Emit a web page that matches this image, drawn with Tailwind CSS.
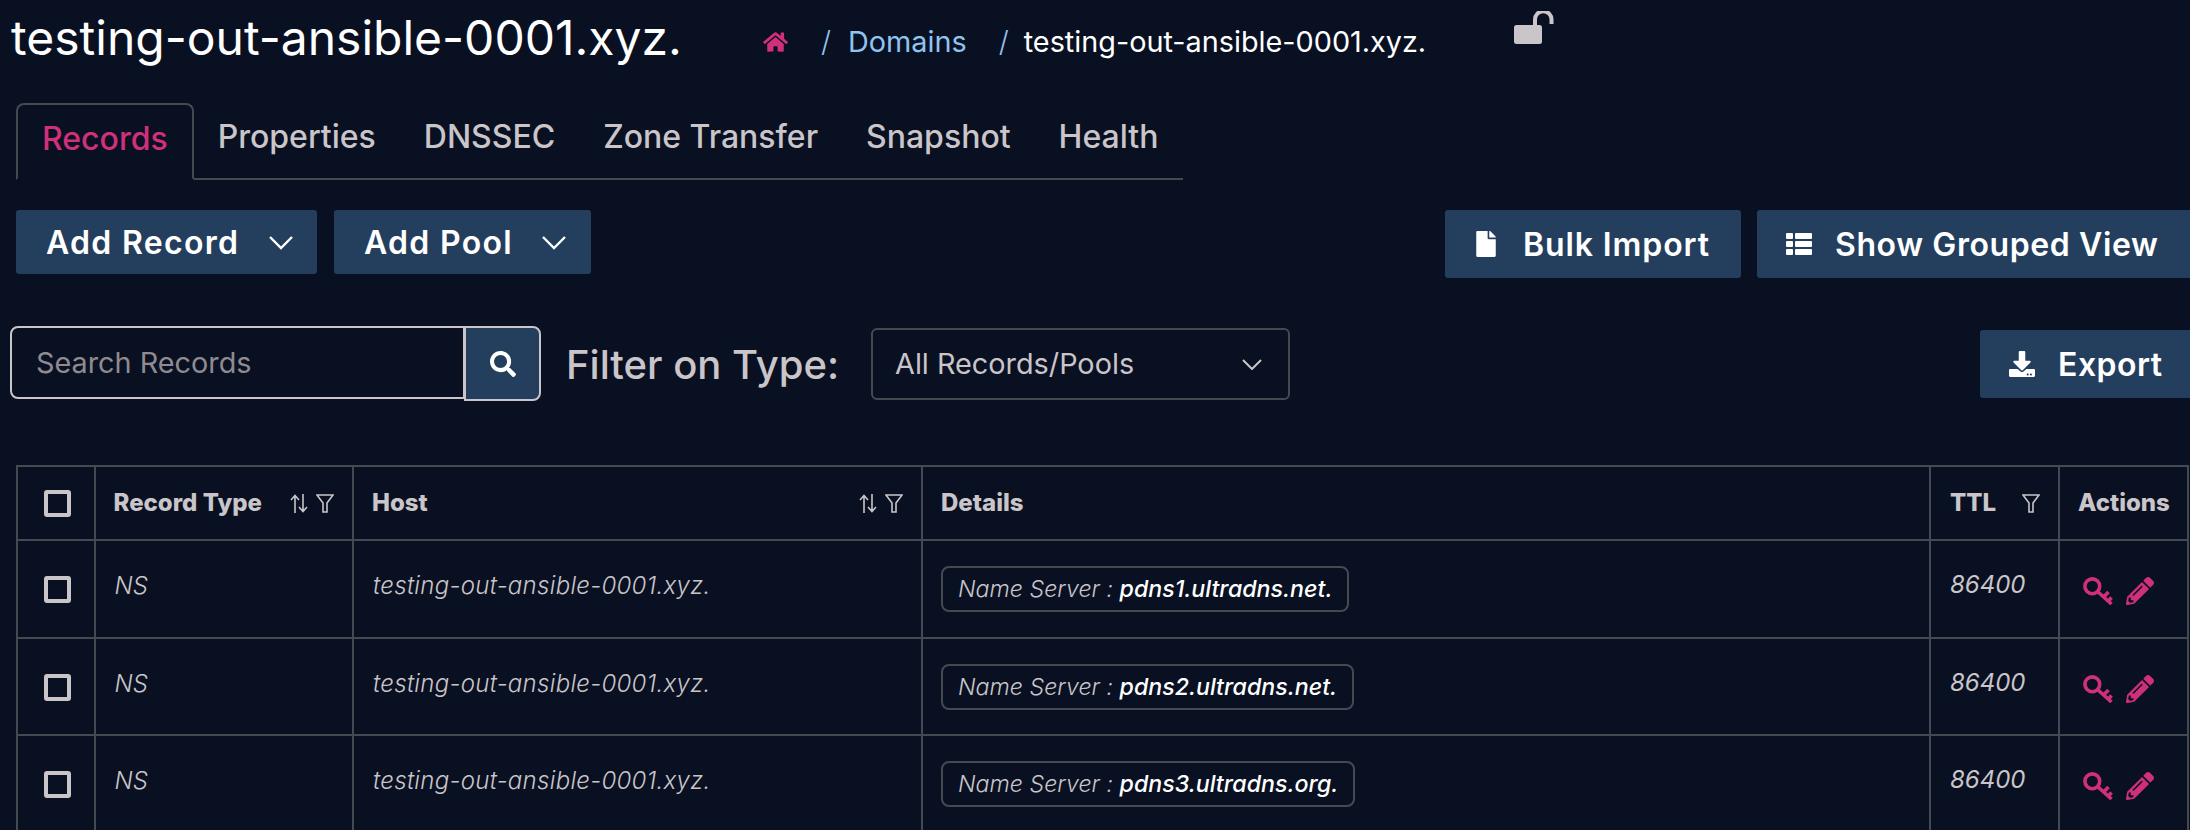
<!DOCTYPE html>
<html lang="en">
<head>
    <meta charset="UTF-8">
    <title>testing-out-ansible-0001.xyz.</title>
    <script src="https://cdn.jsdelivr.net/npm/@tailwindcss/browser@4"></script>
</head>
<body class="w-[2190px] h-[830px] overflow-hidden bg-[#091022] font-[Inter,sans-serif] text-[#c9c5c9]">

    <!-- Title + breadcrumb -->
    <div class="flex h-[103px] pl-[11px]">
        <h1 class="text-[48px] leading-[54px] mt-[11px] text-white w-[752px] shrink-0">testing-out-ansible-0001.xyz.</h1>
        <nav class="flex items-center h-[40px] mt-[22px] text-[28.8px] shrink-0">
            <svg class="w-[25px] h-[22px] fill-[#d0307a]" viewBox="0 0 576 512"><path d="M280.37 148.26L96 300.11V464a16 16 0 0 0 16 16l112.06-.29a16 16 0 0 0 15.92-16V368a16 16 0 0 1 16-16h64a16 16 0 0 1 16 16v95.64a16 16 0 0 0 16 16.05L464 480a16 16 0 0 0 16-16V300L295.67 148.26a12.19 12.19 0 0 0-15.3 0zM571.6 251.47L488 182.56V44.05a12 12 0 0 0-12-12h-56a12 12 0 0 0-12 12v72.61L318.47 43a48 48 0 0 0-61 0L4.34 251.47a12 12 0 0 0-1.6 16.9l25.5 31A12 12 0 0 0 45.15 301l235.22-193.74a12.19 12.19 0 0 1 15.3 0L530.9 301a12 12 0 0 0 16.9-1.6l25.5-31a12 12 0 0 0-1.7-16.93z"/></svg>
            <span class="ml-[33px] text-[#90c4f0] font-light">/</span>
            <a class="ml-[17px] text-[#90c4f0]">Domains</a>
            <span class="ml-[32px] text-[#90c4f0] font-light">/</span>
            <span class="ml-[15px] text-white">testing-out-ansible-0001.xyz.</span>
        </nav>
        <svg class="ml-[88px] mt-[11px] w-[40px] h-[34px] shrink-0" viewBox="0 0 40 34">
            <rect x="0" y="14" width="28" height="19" rx="2.5" fill="#c9c5c9"/>
            <path d="M21 15V8.5a8 8 0 0 1 16.5 0V13" fill="none" stroke="#c9c5c9" stroke-width="4"/>
        </svg>
    </div>

    <!-- Tabs -->
    <div class="flex items-end ml-[16px] w-[1167px] h-[77px] border-b-2 border-[#444a52] text-[32px] font-medium text-[#c9c5c9]">
        <a class="h-[77px] -mb-[2px] pl-[24px] pr-[24px] pt-[12px] rounded-t-[8px] border-2 border-[#444a52] border-b-[#091022] text-[#d0307a] leading-[44px]">Records</a>
        <a class="h-[75px] px-[24px] pt-[12px] leading-[44px]">Properties</a>
        <a class="h-[75px] px-[24px] pt-[12px] leading-[44px]">DNSSEC</a>
        <a class="h-[75px] px-[24px] pt-[12px] leading-[44px]">Zone Transfer</a>
        <a class="h-[75px] px-[24px] pt-[12px] leading-[44px]">Snapshot</a>
        <a class="h-[75px] px-[24px] pt-[12px] leading-[44px]">Health</a>
    </div>

    <!-- Add buttons / import buttons -->
    <div class="flex justify-between items-start mt-[30px] ml-[16px] text-white font-semibold text-[32px] tracking-[0.6px]">
        <div class="flex gap-[17px] tracking-[1.3px]">
            <button class="flex items-center justify-between w-[301px] h-[64px] pl-[30px] pr-[24px] pt-[1px] rounded-[3px] bg-[#243e5e]">
                Add Record
                <svg class="w-[24px] h-[14px]" viewBox="0 0 24 14" fill="none" stroke="#fff" stroke-width="2.4"><path d="M1 1l11 11L23 1"/></svg>
            </button>
            <button class="flex items-center justify-between w-[257px] h-[64px] pl-[30px] pr-[25px] pt-[1px] rounded-[3px] bg-[#243e5e]">
                Add Pool
                <svg class="w-[24px] h-[14px]" viewBox="0 0 24 14" fill="none" stroke="#fff" stroke-width="2.4"><path d="M1 1l11 11L23 1"/></svg>
            </button>
        </div>
        <div class="flex gap-[16px]">
            <button class="flex items-center w-[296px] h-[68px] pl-[31px] rounded-[3px] bg-[#243e5e]">
                <svg class="w-[20px] h-[26px] fill-white" viewBox="0 0 384 512"><path d="M224 136V0H24C10.7 0 0 10.7 0 24v464c0 13.3 10.7 24 24 24h336c13.3 0 24-10.7 24-24V160H248c-13.2 0-24-10.8-24-24zm160-14.1v6.1H256V0h6.1c6.4 0 12.5 2.5 17 7l97.9 98c4.5 4.5 7 10.6 7 16.9z"/></svg>
                <span class="ml-[27px] pt-[2px] tracking-[0.9px]">Bulk Import</span>
            </button>
            <button class="flex items-center w-[433px] h-[68px] pl-[29px] rounded-l-[3px] bg-[#243e5e]">
                <svg class="w-[26px] h-[22px] fill-white" viewBox="0 0 26 22">
                    <rect x="0" y="0" width="7" height="6" rx="1"/><rect x="9" y="0" width="17" height="6" rx="1"/>
                    <rect x="0" y="8" width="7" height="6" rx="1"/><rect x="9" y="8" width="17" height="6" rx="1"/>
                    <rect x="0" y="16" width="7" height="6" rx="1"/><rect x="9" y="16" width="17" height="6" rx="1"/>
                </svg>
                <span class="ml-[23px] pt-[2px]">Show Grouped View</span>
            </button>
        </div>
    </div>

    <!-- Search / filter / export -->
    <div class="flex items-start justify-between mt-[48px] ml-[10px]">
        <div class="flex items-start">
            <div class="flex items-center w-[455px] h-[73px] pl-[24px] rounded-l-[8px] border-2 border-[#c9c5c9] text-[28.8px] text-[#8f8b90]">Search Records</div>
            <div class="flex items-center justify-center w-[77px] h-[75px] -ml-[1px] rounded-r-[8px] border-2 border-[#c9c5c9] bg-[#243e5e]">
                <svg class="w-[26px] h-[26px] fill-white" viewBox="0 0 512 512"><path d="M505 442.7L405.3 343c-4.5-4.5-10.6-7-17-7H372c27.6-35.3 44-79.7 44-128C416 93.1 322.9 0 208 0S0 93.1 0 208s93.1 208 208 208c48.3 0 92.7-16.4 128-44v16.3c0 6.4 2.5 12.5 7 17l99.7 99.7c9.4 9.4 24.6 9.4 33.9 0l28.3-28.3c9.4-9.4 9.4-24.6.1-34zM208 336c-70.7 0-128-57.2-128-128 0-70.7 57.2-128 128-128 70.7 0 128 57.2 128 128 0 70.7-57.2 128-128 128z"/></svg>
            </div>
            <div class="ml-[25px] h-[75px] leading-[78px] text-[40px] font-medium text-[#c9c5c9]">Filter on Type:</div>
            <div class="flex items-center justify-between w-[419px] h-[72px] ml-[32px] mt-[2px] pl-[22px] pr-[26px] rounded-[6px] border-2 border-[#444a52] text-[28.8px]">
                All Records/Pools
                <svg class="w-[20px] h-[11px]" viewBox="0 0 20 11" fill="none" stroke="#c9c5c9" stroke-width="2"><path d="M1 1l9 9 9-9"/></svg>
            </div>
        </div>
        <button class="flex items-center w-[210px] h-[68px] mt-[4px] pl-[29px] rounded-l-[3px] bg-[#243e5e] text-white font-semibold text-[32px] tracking-[0.5px]">
            <svg class="w-[26px] h-[26px] fill-white" viewBox="0 0 512 512"><path d="M216 0h80c13.3 0 24 10.7 24 24v168h87.7c17.8 0 26.7 21.5 14.1 34.1L269.7 378.3c-7.5 7.5-19.8 7.5-27.3 0L90.1 226.1c-12.6-12.6-3.7-34.1 14.1-34.1H192V24c0-13.3 10.7-24 24-24zm296 376v112c0 13.3-10.7 24-24 24H24c-13.3 0-24-10.7-24-24V376c0-13.3 10.7-24 24-24h146.7l49 49c20.1 20.1 52.5 20.1 72.6 0l49-49H488c13.3 0 24 10.7 24 24zm-124 88c0-11-9-20-20-20s-20 9-20 20 9 20 20 20 20-9 20-20zm64 0c0-11-9-20-20-20s-20 9-20 20 9 20 20 20 20-9 20-20z"/></svg>
            <span class="ml-[23px] pt-[2px]">Export</span>
        </button>
    </div>

    <!-- Records table -->
    <table class="table-fixed border-collapse w-[2171px] mt-[64px] ml-[16px] text-[24px]">
        <colgroup>
            <col class="w-[77.5px]"><col class="w-[258.5px]"><col class="w-[569px]"><col class="w-[1008px]"><col class="w-[129px]"><col class="w-[129px]">
        </colgroup>
        <thead>
            <tr class="h-[74px] text-left">
                <th class="border-2 border-[#444a52]"><div class="w-[27px] h-[27px] ml-[26px] rounded-[3px] border-[4px] border-[#c9c5c9]"></div></th>
                <th class="border-2 border-[#444a52] pl-[18px] pr-[18px]">
                    <div class="flex items-center justify-between font-extrabold">Record Type
                        <span class="flex gap-[8px]">
                            <svg class="w-[18px] h-[19px]" viewBox="0 0 18 19" fill="none" stroke="#c9c5c9" stroke-width="1.6"><path d="M5 19V2M1 6l4-4.5L9 6M13 0v17M9 13l4 4.5 4-4.5"/></svg>
                            <svg class="w-[18px] h-[19px]" viewBox="0 0 18 19" fill="none" stroke="#c9c5c9" stroke-width="1.6"><path d="M1 1h16l-6 8v9H7V9z"/></svg>
                        </span>
                    </div>
                </th>
                <th class="border-2 border-[#444a52] pl-[18px] pr-[18px]">
                    <div class="flex items-center justify-between font-extrabold">Host
                        <span class="flex gap-[8px]">
                            <svg class="w-[18px] h-[19px]" viewBox="0 0 18 19" fill="none" stroke="#c9c5c9" stroke-width="1.6"><path d="M5 19V2M1 6l4-4.5L9 6M13 0v17M9 13l4 4.5 4-4.5"/></svg>
                            <svg class="w-[18px] h-[19px]" viewBox="0 0 18 19" fill="none" stroke="#c9c5c9" stroke-width="1.6"><path d="M1 1h16l-6 8v9H7V9z"/></svg>
                        </span>
                    </div>
                </th>
                <th class="border-2 border-[#444a52] pl-[18px] font-extrabold">Details</th>
                <th class="border-2 border-[#444a52] pl-[19px] pr-[18px]">
                    <div class="flex items-center justify-between font-extrabold">TTL
                        <svg class="w-[18px] h-[19px]" viewBox="0 0 18 19" fill="none" stroke="#c9c5c9" stroke-width="1.6"><path d="M1 1h16l-6 8v9H7V9z"/></svg>
                    </div>
                </th>
                <th class="border-2 border-[#444a52] pl-[18px] font-extrabold">Actions</th>
            </tr>
        </thead>
        <tbody class="italic font-light">
            <tr class="h-[97.5px] align-top">
                <td class="border-2 border-[#444a52] pt-[35px]"><div class="w-[27px] h-[27px] ml-[26px] rounded-[3px] border-[4px] border-[#c9c5c9]"></div></td>
                <td class="border-2 border-[#444a52] pl-[19px] pt-[27px]">NS</td>
                <td class="border-2 border-[#444a52] pl-[19px] pt-[27px] tracking-[0.3px]">testing-out-ansible-0001.xyz.</td>
                <td class="border-2 border-[#444a52] pl-[18px] pt-[25px]">
                    <div class="w-fit h-[46px] leading-[42px] px-[15px] rounded-[8px] border-2 border-[#444a52] text-[23.2px]">Name Server : <span class="font-medium text-white">pdns1.ultradns.net.</span></div>
                </td>
                <td class="border-2 border-[#444a52] pl-[19px] pt-[26px] font-normal">86400</td>
                <td class="border-2 border-[#444a52] pl-[23px] pt-[36px]">
                    <div class="flex gap-[13px]">
                        <svg class="w-[30px] h-[28px]" viewBox="0 0 30 28" fill="none" stroke="#d0307a" stroke-width="3.6"><circle cx="9.3" cy="9.3" r="7.4"/><path d="M14.5 14.5L28.5 27M20.5 20l5-5M25 24.5l3.5-4"/></svg>
                        <svg class="w-[28px] h-[28px] fill-[#d0307a]" viewBox="0 0 512 512"><path d="M497.9 142.1l-46.1 46.1c-4.7 4.7-12.3 4.7-17 0l-111-111c-4.7-4.7-4.7-12.3 0-17l46.1-46.1c18.7-18.7 49.1-18.7 67.9 0l60.1 60.1c18.8 18.7 18.8 49.1 0 67.9zM284.2 99.8L21.6 362.4.4 483.9c-2.9 16.4 11.4 30.6 27.8 27.8l121.5-21.3 262.6-262.6c4.7-4.7 4.7-12.3 0-17l-111-111c-4.8-4.7-12.4-4.7-17.1 0zM124.1 339.9c-5.5-5.5-5.5-14.3 0-19.8l154-154c5.5-5.5 14.3-5.5 19.8 0s5.5 14.3 0 19.8l-154 154c-5.5 5.5-14.3 5.5-19.8 0zM88 424h48v36.3l-64.5 11.3-31.1-31.1L51.7 376H88v48z"/></svg>
                    </div>
                </td>
            </tr>
            <tr class="h-[97.5px] align-top">
                <td class="border-2 border-[#444a52] pt-[35px]"><div class="w-[27px] h-[27px] ml-[26px] rounded-[3px] border-[4px] border-[#c9c5c9]"></div></td>
                <td class="border-2 border-[#444a52] pl-[19px] pt-[27px]">NS</td>
                <td class="border-2 border-[#444a52] pl-[19px] pt-[27px] tracking-[0.3px]">testing-out-ansible-0001.xyz.</td>
                <td class="border-2 border-[#444a52] pl-[18px] pt-[25px]">
                    <div class="w-fit h-[46px] leading-[42px] px-[15px] rounded-[8px] border-2 border-[#444a52] text-[23.2px]">Name Server : <span class="font-medium text-white">pdns2.ultradns.net.</span></div>
                </td>
                <td class="border-2 border-[#444a52] pl-[19px] pt-[26px] font-normal">86400</td>
                <td class="border-2 border-[#444a52] pl-[23px] pt-[36px]">
                    <div class="flex gap-[13px]">
                        <svg class="w-[30px] h-[28px]" viewBox="0 0 30 28" fill="none" stroke="#d0307a" stroke-width="3.6"><circle cx="9.3" cy="9.3" r="7.4"/><path d="M14.5 14.5L28.5 27M20.5 20l5-5M25 24.5l3.5-4"/></svg>
                        <svg class="w-[28px] h-[28px] fill-[#d0307a]" viewBox="0 0 512 512"><path d="M497.9 142.1l-46.1 46.1c-4.7 4.7-12.3 4.7-17 0l-111-111c-4.7-4.7-4.7-12.3 0-17l46.1-46.1c18.7-18.7 49.1-18.7 67.9 0l60.1 60.1c18.8 18.7 18.8 49.1 0 67.9zM284.2 99.8L21.6 362.4.4 483.9c-2.9 16.4 11.4 30.6 27.8 27.8l121.5-21.3 262.6-262.6c4.7-4.7 4.7-12.3 0-17l-111-111c-4.8-4.7-12.4-4.7-17.1 0zM124.1 339.9c-5.5-5.5-5.5-14.3 0-19.8l154-154c5.5-5.5 14.3-5.5 19.8 0s5.5 14.3 0 19.8l-154 154c-5.5 5.5-14.3 5.5-19.8 0zM88 424h48v36.3l-64.5 11.3-31.1-31.1L51.7 376H88v48z"/></svg>
                    </div>
                </td>
            </tr>
            <tr class="h-[97.5px] align-top">
                <td class="border-2 border-[#444a52] pt-[35px]"><div class="w-[27px] h-[27px] ml-[26px] rounded-[3px] border-[4px] border-[#c9c5c9]"></div></td>
                <td class="border-2 border-[#444a52] pl-[19px] pt-[27px]">NS</td>
                <td class="border-2 border-[#444a52] pl-[19px] pt-[27px] tracking-[0.3px]">testing-out-ansible-0001.xyz.</td>
                <td class="border-2 border-[#444a52] pl-[18px] pt-[25px]">
                    <div class="w-fit h-[46px] leading-[42px] px-[15px] rounded-[8px] border-2 border-[#444a52] text-[23.2px]">Name Server : <span class="font-medium text-white">pdns3.ultradns.org.</span></div>
                </td>
                <td class="border-2 border-[#444a52] pl-[19px] pt-[26px] font-normal">86400</td>
                <td class="border-2 border-[#444a52] pl-[23px] pt-[36px]">
                    <div class="flex gap-[13px]">
                        <svg class="w-[30px] h-[28px]" viewBox="0 0 30 28" fill="none" stroke="#d0307a" stroke-width="3.6"><circle cx="9.3" cy="9.3" r="7.4"/><path d="M14.5 14.5L28.5 27M20.5 20l5-5M25 24.5l3.5-4"/></svg>
                        <svg class="w-[28px] h-[28px] fill-[#d0307a]" viewBox="0 0 512 512"><path d="M497.9 142.1l-46.1 46.1c-4.7 4.7-12.3 4.7-17 0l-111-111c-4.7-4.7-4.7-12.3 0-17l46.1-46.1c18.7-18.7 49.1-18.7 67.9 0l60.1 60.1c18.8 18.7 18.8 49.1 0 67.9zM284.2 99.8L21.6 362.4.4 483.9c-2.9 16.4 11.4 30.6 27.8 27.8l121.5-21.3 262.6-262.6c4.7-4.7 4.7-12.3 0-17l-111-111c-4.8-4.7-12.4-4.7-17.1 0zM124.1 339.9c-5.5-5.5-5.5-14.3 0-19.8l154-154c5.5-5.5 14.3-5.5 19.8 0s5.5 14.3 0 19.8l-154 154c-5.5 5.5-14.3 5.5-19.8 0zM88 424h48v36.3l-64.5 11.3-31.1-31.1L51.7 376H88v48z"/></svg>
                    </div>
                </td>
            </tr>
        </tbody>
    </table>
</body>
</html>
